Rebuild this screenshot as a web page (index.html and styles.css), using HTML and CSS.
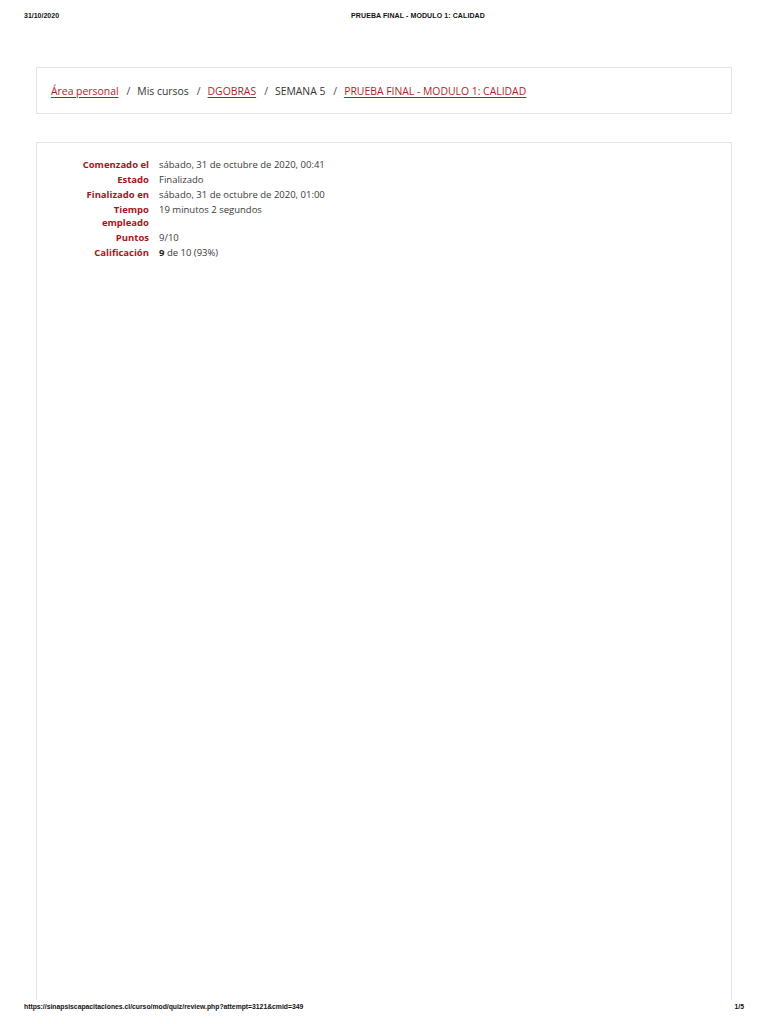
FILE: index.html
```html
<!DOCTYPE html>
<html lang="es">
<head>
<meta charset="utf-8">
<title>PRUEBA FINAL - MODULO 1: CALIDAD</title>
<link rel="stylesheet" href="styles.css">
</head>
<body>
<div class="page">
  <header class="print-head">
    <span class="print-date">31/10/2020</span>
    <span class="print-title">PRUEBA FINAL - MODULO 1: CALIDAD</span>
  </header>

  <nav class="crumbs">
    <a href="#">Área personal</a>
    <span class="sep">/</span>
    <span>Mis cursos</span>
    <span class="sep">/</span>
    <a href="#">DGOBRAS</a>
    <span class="sep">/</span>
    <span>SEMANA 5</span>
    <span class="sep">/</span>
    <a href="#">PRUEBA FINAL - MODULO 1: CALIDAD</a>
  </nav>

  <main class="summary">
    <dl class="info">
      <dt>Comenzado el</dt><dd>sábado, 31 de octubre de 2020, 00:41</dd>
      <dt>Estado</dt><dd>Finalizado</dd>
      <dt>Finalizado en</dt><dd>sábado, 31 de octubre de 2020, 01:00</dd>
      <dt>Tiempo empleado</dt><dd>19 minutos 2 segundos</dd>
      <dt>Puntos</dt><dd>9/10</dd>
      <dt>Calificación</dt><dd><b>9</b> de 10 (93%)</dd>
    </dl>
  </main>

  <footer class="print-foot">
    <span>https://sinapsiscapacitaciones.cl/curso/mod/quiz/review.php?attempt=3121&amp;cmid=349</span>
    <span>1/5</span>
  </footer>
</div>
</body>
</html>
```

FILE: styles.css
```css
html, body {
  margin: 0;
  padding: 0;
  background: #fff;
}

.page {
  width: 768px;
  height: 1024px;
  display: flex;
  flex-direction: column;
  overflow: hidden;
}

.print-head {
  display: flex;
  align-items: center;
  padding: 10px 24px 0 24px;
  height: 10px;
  font-family: "Liberation Sans", Arial, sans-serif;
  font-size: 7px;
  font-weight: bold;
  color: #111;
}

.print-title {
  letter-spacing: 0.1px;
  margin-left: 292px;
}

.crumbs {
  margin: 47px 36px 0 36px;
  height: 45px;
  border: 1px solid #e3e3e3;
  display: flex;
  align-items: center;
  padding: 0 14px;
  font-family: "Open Sans", "Noto Sans", sans-serif;
  font-size: 10.4px;
  color: #333;
}

.crumbs a {
  color: #b01c24;
  text-decoration: underline;
  text-underline-offset: 2px;
}

.crumbs .sep {
  margin: 0 7px 0 8px;
  color: #444;
}

.summary {
  margin: 28px 36px 0 36px;
  border: 1px solid #e3e3e3;
  border-bottom: none;
  flex: 1;
  padding: 15px 0 0 42px;
}

.info {
  margin: 0;
  display: grid;
  grid-template-columns: 70px auto;
  column-gap: 10px;
  row-gap: 2px;
  font-family: "Open Sans", "Noto Sans", sans-serif;
  font-size: 9.5px;
  line-height: 13px;
  color: #3a3a3a;
  justify-content: start;
}

.info dt {
  text-align: right;
  font-weight: bold;
  color: #a3151d;
}

.info dd {
  margin: 0;
}

.info dd b {
  font-weight: bold;
  color: #222;
}

.print-foot {
  display: flex;
  justify-content: space-between;
  align-items: center;
  height: 12px;
  padding: 0 24px;
  margin-bottom: 12px;
  font-family: "Liberation Sans", Arial, sans-serif;
  font-size: 6.8px;
  font-weight: bold;
  color: #111;
}
```
